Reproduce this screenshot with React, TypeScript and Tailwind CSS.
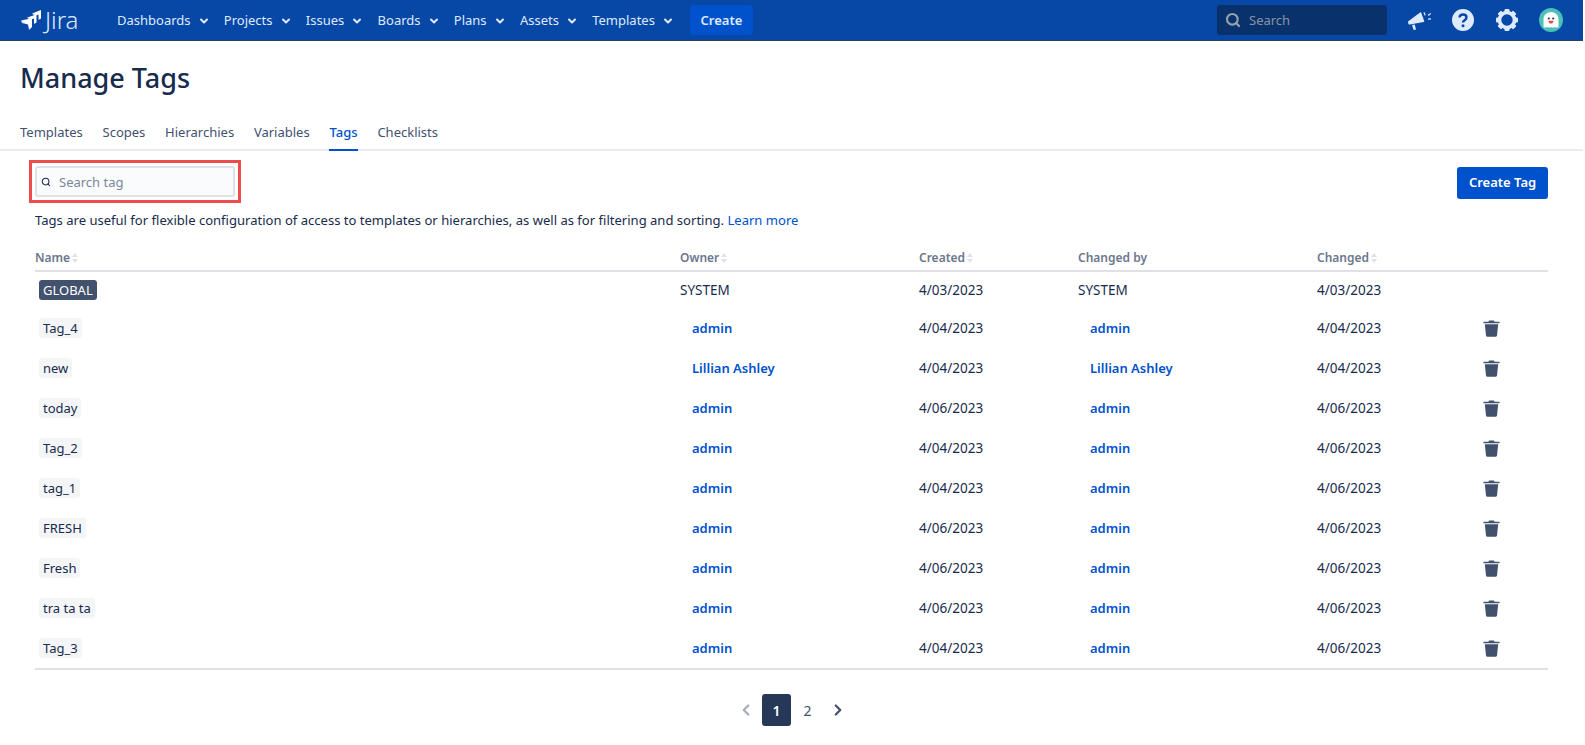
import React from 'react';
import { ChevronDown, ChevronLeft, ChevronRight, Search } from 'lucide-react';

const navItems = ['Dashboards', 'Projects', 'Issues', 'Boards', 'Plans', 'Assets', 'Templates'];
const tabs = ['Templates', 'Scopes', 'Hierarchies', 'Variables', 'Tags', 'Checklists'];

const rows = [
  { tag: 'Tag_4', owner: 'admin', created: '4/04/2023', by: 'admin', changed: '4/04/2023' },
  { tag: 'new', owner: 'Lillian Ashley', created: '4/04/2023', by: 'Lillian Ashley', changed: '4/04/2023' },
  { tag: 'today', owner: 'admin', created: '4/06/2023', by: 'admin', changed: '4/06/2023' },
  { tag: 'Tag_2', owner: 'admin', created: '4/04/2023', by: 'admin', changed: '4/06/2023' },
  { tag: 'tag_1', owner: 'admin', created: '4/04/2023', by: 'admin', changed: '4/06/2023' },
  { tag: 'FRESH', owner: 'admin', created: '4/06/2023', by: 'admin', changed: '4/06/2023' },
  { tag: 'Fresh', owner: 'admin', created: '4/06/2023', by: 'admin', changed: '4/06/2023' },
  { tag: 'tra ta ta', owner: 'admin', created: '4/06/2023', by: 'admin', changed: '4/06/2023' },
  { tag: 'Tag_3', owner: 'admin', created: '4/04/2023', by: 'admin', changed: '4/06/2023' },
];

const JiraMark = () => (
  <svg width="21" height="20" viewBox="0 0 21 20">
    <defs>
      <linearGradient id="fade" x1="0" y1="1" x2="1" y2="0">
        <stop offset="0" stopColor="#deebff" stopOpacity="0.55" />
        <stop offset="0.55" stopColor="#ffffff" />
      </linearGradient>
    </defs>
    <path d="M11 3.500 20 0v8.500l-2.500 1.500V4.500l-4 1.500z" fill="url(#fade)" />
    <path d="M6 7.500 15.500 4.500v8l-2.500 1.500V8.500L8.500 10z" fill="url(#fade)" />
    <path d="M0 10.500 10 8.500c.5 0 1 .3 1 1V17l-3 3-1-5.500-6-1.500z" fill="url(#fade)" />
  </svg>
);

const Megaphone = () => (
  <svg width="24" height="22" viewBox="0 0 24 22" fill="#deebff">
    <path d="M1 12.500 13 3.500c.6-.4 1.100-.2 1.300.4l2.900 8c.2.600 0 1-.6 1.100L3 15.500c-.8.200-1.300-.1-1.600-.8z" />
    <path d="M5 16l2.700-.6L9 20.500l-2.300.6z" />
    <path d="M17.500 3l1.300 3.200-1.200.4-1.200-3.200zM20.800 5.800l2.700-1.800.6 1-2.700 1.900zM21 9.500l3-.2v1.300l-3 .1z" />
  </svg>
);

const HelpIcon = () => (
  <svg width="24" height="24" viewBox="0 0 24 24">
    <circle cx="12" cy="12" r="11" fill="#deebff" />
    <path d="M8.500 9.500C8.700 7.500 10.200 6.500 12 6.500c2 0 3.500 1.200 3.500 3 0 2.700-3.500 2.700-3.500 5" fill="none" stroke="#0747a6" strokeWidth="2.400" />
    <circle cx="12" cy="17.800" r="1.500" fill="#0747a6" />
  </svg>
);

const Gear = () => (
  <svg width="24" height="24" viewBox="0 0 24 24" fill="#deebff">
    {[0, 45, 90, 135, 180, 225, 270, 315].map(a => (
      <rect key={a} x="9.500" y="1" width="5" height="5" rx="1" transform={`rotate(${a} 12 12)`} />
    ))}
    <circle cx="12" cy="12" r="7.500" fill="none" stroke="#deebff" strokeWidth="3.600" />
  </svg>
);

const Ghost = () => (
  <svg width="24" height="24" viewBox="0 0 24 24">
    <circle cx="12" cy="12" r="12" fill="#4bc0b8" />
    <path d="M4.500 19V11C4.500 7 8 4 12 4s7.500 3 7.500 7v8c-1.200.8-2.300.8-3.500 0-1.200.8-2.800.8-4 0-1.200.8-2.800.8-4 0-1.200.8-2.300.8-3.500 0z" fill="#fff" />
    <circle cx="9.800" cy="10.500" r="1.100" fill="#253858" />
    <circle cx="14.200" cy="10.500" r="1.100" fill="#253858" />
    <path d="M9.500 12.800h5c0 1.900-1 2.800-2.500 2.800s-2.500-.9-2.500-2.800z" fill="#e5484d" />
  </svg>
);

const Trash = () => (
  <svg width="17" height="17" viewBox="0 0 17 17" fill="#42526e">
    <path d="M6 .500h5l.5 1.200H16.500v1.500H.500V1.700H5.500z" />
    <path d="M1.800 4.200h13.400l-1.200 11.300c-.1.700-.5 1.200-1.200 1.200H4.200c-.7 0-1.100-.5-1.200-1.200z" />
  </svg>
);

const SortArrows = () => (
  <svg className="ml-[2px] inline-block align-[-1px]" width="6" height="10" viewBox="0 0 6 10" fill="#dfe1e6">
    <path d="M3 0l3 4H0zM3 10L0 6h6z" />
  </svg>
);

const Th = ({ label, sort = true, className = '' }: { label: string; sort?: boolean; className?: string }) => (
  <th className={`p-0 text-left text-[12px] font-semibold text-[#6b778c] ${className}`}>
    {label}
    {sort && <SortArrows />}
  </th>
);

const Tag = ({ children, global }: { children: React.ReactNode; global?: boolean }) => (
  <span className={`ml-[4px] inline-block rounded-[3px] px-[4px] text-[13px] leading-[20px] ${global ? 'bg-[#42526e] text-white' : 'bg-[#f4f5f7] text-[#172b4d]'}`}>
    {children}
  </span>
);

const UserLink = ({ name }: { name: string }) => (
  <a className="ml-[12px] text-[13px] font-semibold text-[#0052cc]">{name}</a>
);

export default function App() {
  return (
    <div className="mr-[2px] h-[745px] overflow-hidden bg-white font-['Noto_Sans',sans-serif] text-[13px] text-[#172b4d]">
      {/* Header */}
      <header className="flex h-[41px] items-center border-b border-[#2c3e5d] bg-[#0747a6] pl-[21px] pr-[20px]">
        <div className="flex w-[96px] items-center gap-[3px] text-[#deebff]">
          <JiraMark />
          <span className="text-[24px] font-light leading-none">Jira</span>
        </div>
        <nav className="flex items-center gap-[14.3px] pt-[2px]">
          {navItems.map(item => (
            <div key={item} className="flex items-center gap-[7px] text-[#deebff]">
              {item}
              <ChevronDown className="h-[12px] w-[12px]" strokeWidth={4} />
            </div>
          ))}
        </nav>
        <button className="ml-[16px] h-[30px] w-[63px] rounded-[3px] bg-[#0052cc] pt-[2px] font-semibold text-[#deebff]">Create</button>
        <div className="ml-auto flex h-[30px] w-[170px] items-center rounded-[3px] bg-[#09326c] pl-[8px] text-[#8993a4]">
          <Search className="h-[16px] w-[16px] text-[#97a0af]" strokeWidth={3.2} />
          <span className="ml-[8px] pt-[2px]">Search</span>
        </div>
        <div className="ml-[20px] flex items-center gap-[20px]">
          <Megaphone />
          <HelpIcon />
          <Gear />
          <Ghost />
        </div>
      </header>

      <main>
        <h1 className="ml-[20px] mt-[17px] text-[27px] font-medium leading-[40px] text-[#172b4d]">Manage Tags</h1>

        {/* Tabs */}
        <div className="mt-[22px] flex h-[31px] gap-[19.8px] border-b-2 border-[#ebecf0] pl-[20px]">
          {tabs.map(tab => (
            <div key={tab} className={`h-[31px] leading-[24px] ${tab === 'Tags' ? 'border-b-2 border-[#0052cc] font-medium text-[#0052cc]' : 'text-[#42526e]'}`}>
              {tab}
            </div>
          ))}
        </div>

        <div className="mx-[35px]">
          <div className="mt-[9px] flex items-start justify-between">
            <div className="-ml-[6px] border-[3px] border-[#ee4c4c] p-[3px]">
              <div className="flex h-[31px] w-[200px] items-center rounded-[3px] border-2 border-[#dfe1e6] bg-[#fafbfc] pl-[4px] text-[#7a869a]">
                <Search className="h-[10px] w-[10px] text-[#172b4d]" strokeWidth={2.5} />
                <span className="ml-[8px] pt-[3px]">Search tag</span>
              </div>
            </div>
            <button className="mt-[7px] h-[32px] w-[91px] rounded-[3px] bg-[#0052cc] font-semibold text-white">Create Tag</button>
          </div>

          <p className="mt-[7px] text-[13.05px] leading-[20px] text-[#172b4d]">
            Tags are useful for flexible configuration of access to templates or hierarchies, as well as for filtering and sorting. <a className="text-[#0052cc]">Learn more</a>
          </p>

          <table className="mt-[16px] w-full table-fixed border-b-2 border-[#dfe1e6]">
            <thead>
              <tr className="h-[25px] border-b-2 border-[#dfe1e6]">
                <Th label="Name" className="w-[645px]" />
                <Th label="Owner" className="w-[239px]" />
                <Th label="Created" className="w-[159px]" />
                <Th label="Changed by" sort={false} className="w-[239px]" />
                <Th label="Changed" className="w-[150px]" />
                <th />
              </tr>
            </thead>
            <tbody className="text-[13.5px]">
              <tr className="h-[37px]">
                <td className="p-0"><Tag global>GLOBAL</Tag></td>
                <td className="p-0">SYSTEM</td>
                <td className="p-0">4/03/2023</td>
                <td className="p-0">SYSTEM</td>
                <td className="p-0">4/03/2023</td>
                <td />
              </tr>
              {rows.map(row => (
                <tr key={row.tag} className="h-[40px] last:h-[41px]">
                  <td className="p-0"><Tag>{row.tag}</Tag></td>
                  <td className="p-0"><UserLink name={row.owner} /></td>
                  <td className="p-0">{row.created}</td>
                  <td className="p-0"><UserLink name={row.by} /></td>
                  <td className="p-0">{row.changed}</td>
                  <td className="p-0 pl-[16px]"><Trash /></td>
                </tr>
              ))}
            </tbody>
          </table>

          <div className="mt-[24px] flex items-center justify-center gap-[2px] text-[14px]">
            <div className="flex h-[32px] w-[29px] items-center justify-center text-[#a5adba]"><ChevronLeft className="h-[18px] w-[18px]" strokeWidth={3} /></div>
            <div className="flex h-[32px] w-[29px] items-center justify-center rounded-[3px] bg-[#253858] font-semibold text-white">1</div>
            <div className="flex h-[32px] w-[29px] items-center justify-center text-[#42526e]">2</div>
            <div className="-ml-[1px] flex h-[32px] w-[29px] items-center justify-center text-[#42526e]"><ChevronRight className="h-[18px] w-[18px]" strokeWidth={3} /></div>
          </div>
        </div>
      </main>
    </div>
  );
}
